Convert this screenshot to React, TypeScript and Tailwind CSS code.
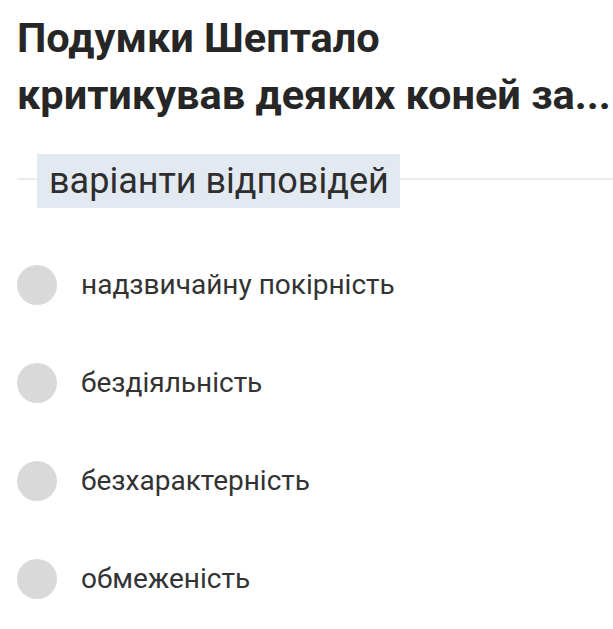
import React from "react";

const options = [
  "надзвичайну покірність",
  "бездіяльність",
  "безхарактерність",
  "обмеженість",
];

export default function App() {
  return (
    <div
      className="w-[613px] h-[629px] bg-white overflow-hidden"
      style={{ fontFamily: "Roboto, 'Noto Sans', sans-serif" }}
    >
      <h1 className="pt-[9px] pl-[17px] text-[41.5px] leading-[57px] font-bold text-[#262626] whitespace-nowrap">
        Подумки Шептало
        <br />
        критикував деяких коней за...
      </h1>
      <div className="relative mt-[31px] h-[54px] pl-[37px] flex items-center">
        <div className="absolute left-[17px] right-0 top-[24px] h-[2px] bg-[#e7ecee]" />
        <div className="relative h-[54px] bg-[#e3e9f1] pl-[12px] pr-[11px] flex items-center text-[36px] text-[#2e2e2e]">
          варіанти відповідей
        </div>
      </div>
      <div className="mt-[28px] flex flex-col">
        {options.map((o) => (
          <div key={o} className="h-[98px] flex items-center pl-[17px]">
            <div className="w-[40px] h-[40px] rounded-full bg-[#d9d9d9] shrink-0" />
            <span className="ml-[24px] text-[28px] text-[#333333]">{o}</span>
          </div>
        ))}
      </div>
    </div>
  );
}
